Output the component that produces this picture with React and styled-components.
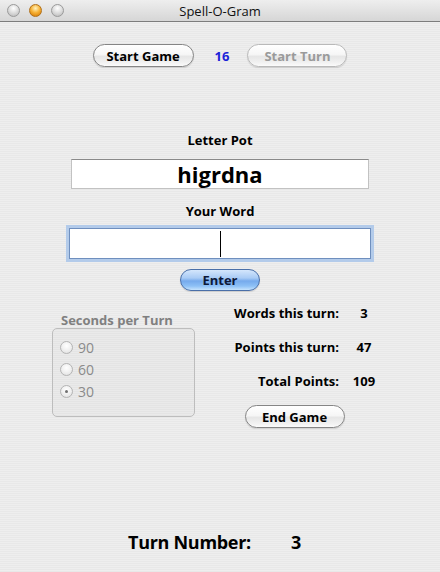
import styled, { createGlobalStyle } from 'styled-components';

const GlobalStyle = createGlobalStyle`
  html, body { margin: 0; padding: 0; }
  body { font-family: "Lucida Grande", "Open Sans", sans-serif; }
`;

const Window = styled.div`
  width: 440px;
  height: 572px;
  display: flex;
  flex-direction: column;
  overflow: hidden;
  background: repeating-linear-gradient(to bottom, #eeeeee 0 1px, #e8e8e8 1px 2px);
  font-family: "Lucida Grande", "Open Sans", sans-serif;
  color: #000;
`;

const TitleBar = styled.div`
  height: 21px;
  border-bottom: 1px solid #7c7c7c;
  background: linear-gradient(#eeeeee, #d6d6d6);
  display: grid;
  grid-template-columns: 1fr auto 1fr;
  align-items: center;
`;

const Lights = styled.div`
  display: flex;
  gap: 9px;
  padding-left: 7px;
`;

const Light = styled.span`
  width: 13px;
  height: 13px;
  border-radius: 50%;
  box-sizing: border-box;
  border: 1px solid ${({ $on }) => ($on ? '#b0701a' : '#9a9a9a')};
  background: ${({ $on }) =>
    $on
      ? 'radial-gradient(circle at 50% 30%, #fff3c0 0, #f7b43a 45%, #e08a10 80%)'
      : 'radial-gradient(circle at 50% 30%, #ffffff 0, #d8d8d8 55%, #bcbcbc 90%)'};
`;

const Title = styled.div`
  font-size: 13px;
  color: #111;
  line-height: 16px;
`;

const TopRow = styled.div`
  margin-top: 22px;
  display: flex;
  justify-content: center;
  align-items: center;
`;

const Button = styled.button`
  width: ${({ $w }) => $w}px;
  height: 23px;
  padding: 0;
  border-radius: 12px;
  border: 1px solid ${({ disabled }) => (disabled ? '#b9b9b9' : '#858585')};
  background: linear-gradient(#ffffff 0, #f6f6f6 45%, #e6e6e6 55%, #f2f2f2 85%, #fbfbfb 100%);
  box-shadow: 0 1px 1px rgba(0, 0, 0, 0.12);
  font-family: inherit;
  font-size: 13px;
  font-weight: bold;
  color: ${({ disabled }) => (disabled ? '#9a9a9a' : '#000')};
`;

const BlueButton = styled(Button)`
  height: 22px;
  border-color: #4a6fa8;
  background: linear-gradient(#d4e6fc 0, #a9cbf5 40%, #76aaec 55%, #8dc0f6 80%, #c6e3fd 100%);
  color: #0d1838;
`;

const Count = styled.span`
  margin: 0 18px 0 21px;
  font-size: 13px;
  font-weight: bold;
  color: #1a22d8;
`;

const Label = styled.div`
  margin-top: ${({ $mt }) => $mt}px;
  text-align: center;
  font-size: 13px;
  font-weight: bold;
  line-height: 16px;
`;

const PotField = styled.div`
  width: 298px;
  height: 30px;
  margin: 11px auto 0;
  box-sizing: border-box;
  border: 1px solid #c2c2c2;
  border-top-color: #8a8a8a;
  background: #fff;
  text-align: center;
  font-size: 22px;
  font-weight: bold;
  line-height: 28px;
`;

const WordField = styled.div`
  width: 302px;
  height: 31px;
  margin: 9px auto 0;
  box-sizing: border-box;
  border: 1px solid #6f8fbe;
  background: #fff;
  box-shadow: 0 0 0 3px #b3cbea;
  display: flex;
  justify-content: center;
  align-items: center;
`;

const Caret = styled.span`
  width: 1px;
  height: 26px;
  background: #000;
`;

const Center = styled.div`
  display: flex;
  justify-content: center;
  margin-top: ${({ $mt }) => $mt}px;
`;

const Bottom = styled.div`
  margin-top: 14px;
  display: flex;
`;

const LeftCol = styled.div`
  margin-left: 52px;
  width: 143px;
`;

const GroupTitle = styled.div`
  margin-top: 7px;
  padding-left: 9px;
  font-size: 13px;
  font-weight: bold;
  line-height: 16px;
  color: #808080;
`;

const GroupBox = styled.div`
  height: 89px;
  box-sizing: border-box;
  border: 1px solid #bdbdbd;
  border-radius: 5px;
  padding: 7px 0 0 7px;
  background: rgba(0, 0, 0, 0.015);
`;

const RadioRow = styled.div`
  height: 22px;
  display: flex;
  align-items: center;
  gap: 5px;
  font-size: 14px;
  color: #8a8a8a;
`;

const Radio = styled.span`
  width: 13px;
  height: 13px;
  box-sizing: border-box;
  border-radius: 50%;
  border: 1px solid #b4b4b4;
  background: radial-gradient(circle at 50% 35%, #ffffff 0, #f0f0f0 50%, #dcdcdc 100%);
  display: flex;
  align-items: center;
  justify-content: center;

  &::after {
    content: '';
    width: 3px;
    height: 3px;
    border-radius: 50%;
    background: ${({ $checked }) => ($checked ? '#707070' : 'transparent')};
  }
`;

const RightCol = styled.div`
  margin-left: 5px;
  width: 189px;
  display: flex;
  flex-direction: column;
  align-items: center;
`;

const Stats = styled.div`
  display: grid;
  grid-template-columns: 139px 50px;
  row-gap: 18px;
  font-size: 13px;
  font-weight: bold;
  line-height: 16px;
`;

const StatLabel = styled.span`
  text-align: right;
`;

const StatValue = styled.span`
  text-align: center;
`;

const Footer = styled.div`
  margin-top: auto;
  margin-bottom: 18px;
  padding-right: 11px;
  text-align: center;
  font-size: 18px;
  font-weight: bold;
  letter-spacing: -0.3px;
  line-height: 24px;
`;

const TurnValue = styled.span`
  margin-left: 40px;
`;

const stats = [
  ['Words this turn:', 3],
  ['Points this turn:', 47],
  ['Total Points:', 109],
];

export default function App() {
  return (
    <>
      <GlobalStyle />
      <Window>
        <TitleBar>
          <Lights>
            <Light />
            <Light $on />
            <Light />
          </Lights>
          <Title>Spell-O-Gram</Title>
          <span />
        </TitleBar>

        <TopRow>
          <Button $w={101}>Start Game</Button>
          <Count>16</Count>
          <Button $w={100} disabled>Start Turn</Button>
        </TopRow>

        <Label $mt={65}>Letter Pot</Label>
        <PotField>higrdna</PotField>

        <Label $mt={14}>Your Word</Label>
        <WordField><Caret /></WordField>

        <Center $mt={10}>
          <BlueButton $w={80}>Enter</BlueButton>
        </Center>

        <Bottom>
          <LeftCol>
            <GroupTitle>Seconds per Turn</GroupTitle>
            <GroupBox>
              {[90, 60, 30].map((s) => (
                <RadioRow key={s}>
                  <Radio $checked={s === 30} />
                  {s}
                </RadioRow>
              ))}
            </GroupBox>
          </LeftCol>
          <RightCol>
            <Stats>
              {stats.map(([label, value]) => [
                <StatLabel key={label}>{label}</StatLabel>,
                <StatValue key={label + 'v'}>{value}</StatValue>,
              ])}
            </Stats>
            <Center $mt={16}>
              <Button $w={100}>End Game</Button>
            </Center>
          </RightCol>
        </Bottom>

        <Footer>
          Turn Number:<TurnValue>3</TurnValue>
        </Footer>
      </Window>
    </>
  );
}
